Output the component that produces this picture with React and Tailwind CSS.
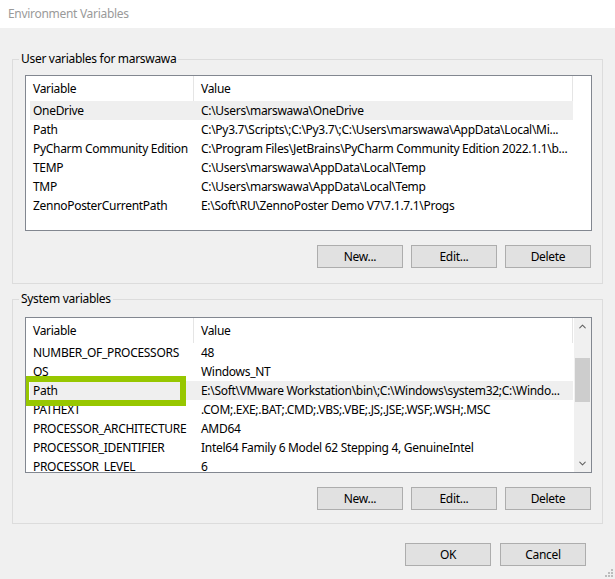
import { ChevronUp, ChevronDown } from 'lucide-react'

const userVars = [
  ['OneDrive', 'C:\\Users\\marswawa\\OneDrive'],
  ['Path', 'C:\\Py3.7\\Scripts\\;C:\\Py3.7\\;C:\\Users\\marswawa\\AppData\\Local\\Mi...'],
  ['PyCharm Community Edition', 'C:\\Program Files\\JetBrains\\PyCharm Community Edition 2022.1.1\\b...'],
  ['TEMP', 'C:\\Users\\marswawa\\AppData\\Local\\Temp'],
  ['TMP', 'C:\\Users\\marswawa\\AppData\\Local\\Temp'],
  ['ZennoPosterCurrentPath', 'E:\\Soft\\RU\\ZennoPoster Demo V7\\7.1.7.1\\Progs'],
]

const systemVars = [
  ['NUMBER_OF_PROCESSORS', '48'],
  ['OS', 'Windows_NT'],
  ['Path', 'E:\\Soft\\VMware Workstation\\bin\\;C:\\Windows\\system32;C:\\Windo...'],
  ['PATHEXT', '.COM;.EXE;.BAT;.CMD;.VBS;.VBE;.JS;.JSE;.WSF;.WSH;.MSC'],
  ['PROCESSOR_ARCHITECTURE', 'AMD64'],
  ['PROCESSOR_IDENTIFIER', 'Intel64 Family 6 Model 62 Stepping 4, GenuineIntel'],
  ['PROCESSOR_LEVEL', '6'],
]

function Btn({ children }) {
  return (
    <button className="w-[86px] h-[23px] bg-[#e1e1e1] border border-[#adadad] text-black text-[12px] leading-none">
      {children}
    </button>
  )
}

function ListView({ rows, selected, scroll, highlight }) {
  return (
    <div className="relative w-[567px] h-[156px] border border-[#828790] bg-white flex overflow-hidden">
      <div className="flex-1 min-w-0">
        {/* header */}
        <div className="flex h-[25px] items-center">
          <div className="w-[168px] h-full pl-[7px] flex items-center border-r border-[#e5e5e5]">Variable</div>
          <div className="w-[379px] h-full pl-[7px] flex items-center border-r border-[#e5e5e5]">Value</div>
        </div>
        {rows.map(([name, value], i) => (
          <div key={name} className="flex h-[19px] pl-[4px]">
            <div className={`flex w-[543px] items-center ${i === selected ? 'bg-[#efefef]' : ''}`}>
              <div className="w-[164px] pl-[3px] whitespace-nowrap overflow-hidden">{name}</div>
              <div className="w-[379px] pl-[7px] whitespace-nowrap overflow-hidden">{value}</div>
            </div>
          </div>
        ))}
      </div>
      {scroll && (
        <div className="w-[17px] h-full bg-[#f0f0f0] flex flex-col items-center">
          <div className="h-[17px] flex items-center justify-center text-[#606060]">
            <ChevronUp size={11} strokeWidth={2.2} />
          </div>
          <div className="h-[23px]" />
          <div className="w-[15px] h-[44px] bg-[#cdcdcd]" />
          <div className="flex-1" />
          <div className="h-[17px] flex items-center justify-center text-[#606060]">
            <ChevronDown size={11} strokeWidth={2.2} />
          </div>
        </div>
      )}
      {highlight && (
        <div className="absolute left-[-3px] top-[58px] w-[163px] h-[30px] border-[6px] border-[#97c700]" />
      )}
    </div>
  )
}

function Group({ label, children, className }) {
  return (
    <div className={`relative border border-[#dcdcdc] ${className}`}>
      <span className="absolute left-[6px] top-[-9px] px-[2px] bg-[#f0f0f0] leading-[16px]">{label}</span>
      {children}
    </div>
  )
}

export default function App() {
  return (
    <div
      className="w-[615px] h-[579px] bg-[#f0f0f0] flex flex-col text-[12px] tracking-[-0.3px] text-black"
      style={{ fontFamily: '"Noto Sans", "Open Sans", sans-serif' }}
    >
      {/* Title bar */}
      <div className="h-[28px] bg-white flex items-center pl-[8px] text-[#9a9a9a]">Environment Variables</div>

      <div className="px-[12px]">
        <Group label="User variables for marswawa" className="mt-[31px] h-[225px] pt-[15px] pl-[12px]">
          <ListView rows={userVars} selected={0} />
          <div className="flex justify-end gap-[8px] mt-[14px] pr-[11px]">
            <Btn>New...</Btn>
            <Btn>Edit...</Btn>
            <Btn>Delete</Btn>
          </div>
        </Group>

        <Group label="System variables" className="mt-[15px] h-[225px] pt-[17px] pl-[12px]">
          <ListView rows={systemVars} selected={2} scroll highlight />
          <div className="flex justify-end gap-[8px] mt-[14px] pr-[11px]">
            <Btn>New...</Btn>
            <Btn>Edit...</Btn>
            <Btn>Delete</Btn>
          </div>
        </Group>
      </div>

      <div className="flex justify-end gap-[9px] mt-[19px] pr-[29px]">
        <Btn>OK</Btn>
        <Btn>Cancel</Btn>
      </div>

      <div className="flex-1 flex justify-end items-end pr-[2px] pb-[2px]">
        <svg width="10" height="10" viewBox="0 0 10 10">
          {[[8, 0], [8, 3], [5, 3], [8, 6], [5, 6], [2, 6]].map(([x, y]) => (
            <rect key={`${x}-${y}`} x={x} y={y + 2} width="2" height="2" fill="#bcbcbc" />
          ))}
        </svg>
      </div>
    </div>
  )
}
